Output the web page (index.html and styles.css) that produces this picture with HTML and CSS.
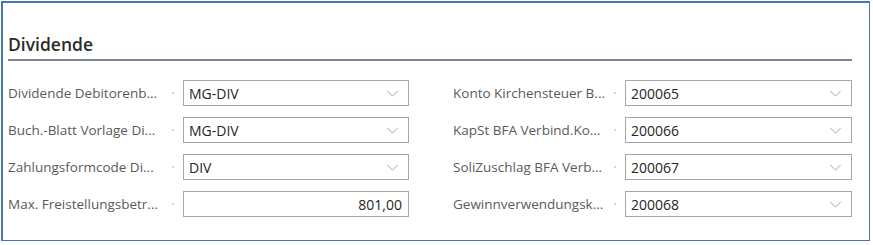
FILE: index.html
```html
<!DOCTYPE html>
<html lang="de">
<head>
  <meta charset="UTF-8" />
  <title>Dividende</title>
  <link rel="stylesheet" href="styles.css">
</head>
<body>
  <div class="frame">
    <section class="group">
      <h2 class="group-title">Dividende</h2>
      <div class="fields">
        <div class="column">
          <div class="field">
            <span class="field-label">Dividende Debitorenb...</span>
            <span class="field-dot"></span>
            <div class="field-box">
              <span class="field-value">MG-DIV</span>
              <svg class="chevron" viewBox="0 0 14 8"><path d="M1 1l6 6 6-6" /></svg>
            </div>
          </div>
          <div class="field">
            <span class="field-label">Buch.-Blatt Vorlage Di...</span>
            <span class="field-dot"></span>
            <div class="field-box">
              <span class="field-value">MG-DIV</span>
              <svg class="chevron" viewBox="0 0 14 8"><path d="M1 1l6 6 6-6" /></svg>
            </div>
          </div>
          <div class="field">
            <span class="field-label">Zahlungsformcode Di...</span>
            <span class="field-dot"></span>
            <div class="field-box">
              <span class="field-value">DIV</span>
              <svg class="chevron" viewBox="0 0 14 8"><path d="M1 1l6 6 6-6" /></svg>
            </div>
          </div>
          <div class="field">
            <span class="field-label">Max. Freistellungsbetr...</span>
            <span class="field-dot"></span>
            <div class="field-box number">
              <span class="field-value">801,00</span>
            </div>
          </div>
        </div>
        <div class="column right">
          <div class="field">
            <span class="field-label">Konto Kirchensteuer B...</span>
            <span class="field-dot"></span>
            <div class="field-box">
              <span class="field-value">200065</span>
              <svg class="chevron" viewBox="0 0 14 8"><path d="M1 1l6 6 6-6" /></svg>
            </div>
          </div>
          <div class="field">
            <span class="field-label">KapSt BFA Verbind.Ko...</span>
            <span class="field-dot"></span>
            <div class="field-box">
              <span class="field-value">200066</span>
              <svg class="chevron" viewBox="0 0 14 8"><path d="M1 1l6 6 6-6" /></svg>
            </div>
          </div>
          <div class="field">
            <span class="field-label">SoliZuschlag BFA Verb...</span>
            <span class="field-dot"></span>
            <div class="field-box">
              <span class="field-value">200067</span>
              <svg class="chevron" viewBox="0 0 14 8"><path d="M1 1l6 6 6-6" /></svg>
            </div>
          </div>
          <div class="field">
            <span class="field-label">Gewinnverwendungsk...</span>
            <span class="field-dot"></span>
            <div class="field-box">
              <span class="field-value">200068</span>
              <svg class="chevron" viewBox="0 0 14 8"><path d="M1 1l6 6 6-6" /></svg>
            </div>
          </div>
        </div>
      </div>
    </section>
  </div>
</body>
</html>
```

FILE: styles.css
```css
body {
  margin: 0;
  font-family: "Open Sans", "Noto Sans", sans-serif;
  background-color: #ffffff;
  color: #333333;
}
.frame {
  margin: 1px 0 0 1px;
  width: 866px;
  height: 237px;
  border: 2px solid #4677b4;
  border-right-width: 1px;
  border-bottom-width: 1px;
  box-sizing: content-box;
}
.group {
  padding: 29px 17px 0 5px;
}
.group-title {
  margin: 0;
  padding-bottom: 3px;
  font-size: 17.5px;
  line-height: 24px;
  font-weight: 600;
  color: #2b2b2b;
  border-bottom: 2px solid #7d8794;
}
.fields {
  display: grid;
  grid-template-columns: 401px 399px;
  column-gap: 44px;
  padding-top: 19px;
}
.column {
  display: flex;
  flex-direction: column;
  gap: 11px;
}
.field {
  display: flex;
  align-items: center;
  height: 26px;
}
.field-label {
  width: 164px;
  font-size: 13.5px;
  color: #5a5a5a;
  white-space: nowrap;
  overflow: hidden;
}
.right .field-label {
  width: 161px;
}
.field-dot {
  width: 2px;
  height: 2px;
  margin-right: 9px;
  background-color: #d6d6d6;
}
.field-box {
  flex: 1;
  display: flex;
  align-items: center;
  justify-content: space-between;
  height: 26px;
  padding: 0 9px 0 5px;
  border: 1px solid #a6a6a6;
  box-sizing: border-box;
}
.field-box.number {
  justify-content: flex-end;
  padding-right: 6px;
}
.field-value {
  font-size: 14px;
  color: #262626;
}
.chevron {
  width: 13px;
  height: 7px;
  fill: none;
  stroke: #999999;
  stroke-width: 1;
}
```
